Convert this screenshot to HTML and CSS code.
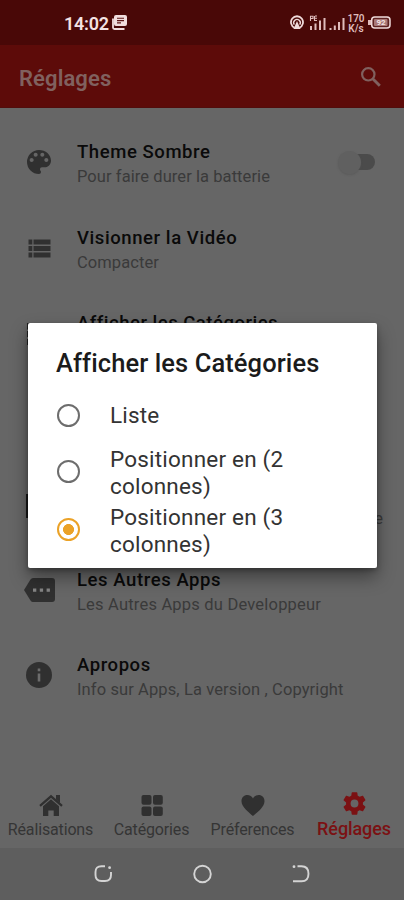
FILE: index.html
```html
<!DOCTYPE html>
<html lang="fr">
<head>
<meta charset="utf-8">
<meta name="viewport" content="width=device-width, initial-scale=1">
<title>Réglages</title>
<link rel="stylesheet" href="styles.css">
</head>
<body>
<div class="screen">
  <header class="status">
    <div class="clock"><span class="time">14:02</span>
      <svg width="15" height="15" viewBox="0 0 15 15"><path fill="#f1dddd" d="M4 0h9q2 0 2 2v7q0 2-2 2H4q-2 0-2-2V2q0-2 2-2z"/><path d="M1 3.500v9q0 1.500 1.500 1.500h10" fill="none" stroke="#f1dddd" stroke-width="1.800"/><path d="M5 3.300h7M5 5.600h7M5 7.900h4" stroke="#5a1414" stroke-width="1.100"/></svg>
    </div>
    <div class="signals">
      <svg class="cast" width="14" height="15" viewBox="0 0 14 15"><g fill="none" stroke="#efdada" stroke-width="1.800"><path d="M4.500 12.700a6 6 0 1 1 5 0"/><path d="M4.300 9.700a3.300 3.300 0 1 1 5.400 0" stroke-width="1.400"/></g><path fill="#efdada" d="M7 6l3.500 8h-7z"/></svg>
      <svg class="bars" width="37" height="16" viewBox="0 0 37 16"><g fill="#dfbcbc"><path d="M1 11h2v4H1zM5.500 8.500h2V15h-2zM10 5.500h2V15h-2zM14.500 3h2v12h-2zM20.500 13h2v2h-2zM24.800 10.500h2V15h-2zM29 7h2v8h-2zM33.500 3h2v12h-2z"/></g><path d="M1.500 1v5M1 1.300h3v2.200H2M6 1h2M6 3.200h2M6 5.500h2M5.500 1v5" fill="none" stroke="#dfbcbc" stroke-width="1.100"/></svg>
      <div class="speed"><span>170</span><span>K/s</span></div>
      <svg class="battery" width="23" height="13" viewBox="0 0 23 13"><path fill="#dfbcbc" d="M0 4h3v5H0z"/><rect x="3.700" y="1" width="18.300" height="11" rx="3" fill="#5e2221" stroke="#efdada" stroke-width="1.500"/><rect x="6" y="3" width="13.500" height="7" rx="1" fill="#a87877"/><text class="level" x="13" y="9.300" text-anchor="middle">92</text></svg>
    </div>
  </header>
  <div class="appbar">
    <h1>Réglages</h1>
    <svg width="22" height="22" viewBox="0 0 22 22" fill="none" stroke="#80615f"><circle cx="8.300" cy="8.300" r="6.200" stroke-width="2.200"/><path d="M13 13l6.800 6.800" stroke-width="2.900"/></svg>
  </div>
  <main class="settings">
    <section class="row">
      <svg class="icon palette" viewBox="3 3 18 18"><path fill="#303030" d="M12 3a9 9 0 0 0 0 18c.83 0 1.500-.67 1.500-1.500 0-.39-.15-.74-.39-1.010-.23-.26-.38-.61-.38-.99 0-.83.67-1.500 1.500-1.500H16c2.760 0 5-2.240 5-5 0-4.420-4.030-8-9-8zm-5.500 9c-.83 0-1.500-.67-1.500-1.500S5.670 9 6.500 9 8 9.670 8 10.500 7.330 12 6.500 12zm3-4C8.670 8 8 7.330 8 6.500S8.670 5 9.500 5s1.500.67 1.500 1.500S10.330 8 9.500 8zm5 0c-.83 0-1.500-.67-1.500-1.500S13.670 5 14.500 5s1.500.67 1.500 1.500S15.330 8 14.500 8zm3 4c-.83 0-1.500-.67-1.500-1.500S16.670 9 17.500 9s1.500.67 1.500 1.500-.67 1.500-1.500 1.500z"/></svg>
      <div class="copy"><h2>Theme Sombre</h2><p>Pour faire durer la batterie</p></div>
      <span class="switch"></span>
    </section>
    <section class="row">
      <svg class="icon" viewBox="0 0 24 24"><path fill="#303030" d="M2.500 2.500h3.800v5H2.500zM7.500 2.500h17v5h-17zM2.500 9h3.800v5H2.500zM7.500 9h17v5h-17zM2.500 15.500h3.800v5H2.500zM7.500 15.500h17v5h-17z"/></svg>
      <div class="copy"><h2>Visionner la Vidéo</h2><p>Compacter</p></div>
    </section>
    <section class="row">
      <svg class="icon" viewBox="0 0 24 24"><path fill="#202020" d="M1 0h23v6.500H1zM1 8h5v6H1zM1 16h5v6H1z"/></svg>
      <div class="copy"><h2 class="t3">Afficher les Catégories</h2></div>
    </section>
    <section class="row"></section>
    <section class="row">
      <svg class="icon" viewBox="0 0 24 24"><path fill="#181818" d="M0 0h24v24H0z"/></svg>
      <div class="copy tail"><p>e</p></div>
    </section>
    <section class="row">
      <svg class="icon wide" viewBox="0 0 31 24"><path fill="#303030" d="M9 0h19q3 0 3 3v18q0 3-3 3H9q-1.500 0-2.500-1.500L0 12l6.500-10.500Q7.500 0 9 0z"/><path fill="#858585" d="M9 10.500h3.300v3.300H9zM15.800 10.500h3.300v3.300h-3.300zM22.600 10.500h3.300v3.300h-3.300z"/></svg>
      <div class="copy"><h2>Les Autres Apps</h2><p class="p6">Les Autres Apps du Developpeur</p></div>
    </section>
    <section class="row">
      <svg class="icon info" viewBox="0 0 26 26"><circle cx="13" cy="13" r="13" fill="#303030"/><path fill="#6c6c6c" d="M11.700 6.500h2.600v2.700h-2.600zM11.700 11.500h2.600v8h-2.600z"/></svg>
      <div class="copy"><h2>Apropos</h2><p class="p7">Info sur Apps, La version , Copyright</p></div>
    </section>
  </main>
  <nav class="tabs">
    <div class="tab"><svg width="24" height="24" viewBox="0 0 24 24"><path d="M1 12.800L12 3.300l11 9.500" fill="none" stroke="#303030" stroke-width="2.200"/><path fill="#303030" d="M17 2h4v8l-4-3.500zM12 6.300l8 7V23h-5.300v-5.500H9.300V23H4v-9.700z"/></svg><span>Réalisations</span></div>
    <div class="tab"><svg width="24" height="24" viewBox="0 0 24 24" fill="#303030"><rect x="1.500" y="2" width="10" height="9.700" rx="2"/><rect x="13" y="2" width="9.800" height="9.700" rx="2"/><rect x="1.500" y="13.500" width="10" height="9.500" rx="2"/><rect x="13" y="13.500" width="9.800" height="9.500" rx="2"/></svg><span>Catégories</span></div>
    <div class="tab"><svg width="24" height="24" viewBox="0 0 24 24"><path fill="#303030" d="M12 23C8 19.500.500 14 .500 8.200.500 4.500 3 2 6.300 2 8.800 2 11 3.300 12 5.500 13 3.300 15.200 2 17.700 2 21 2 23.500 4.500 23.500 8.200 23.500 14 16 19.500 12 23z"/></svg><span>Préferences</span></div>
    <div class="tab active"><svg width="27" height="27" viewBox="0 0 24 24"><path fill="#7b1113" d="M19.430 12.980c.04-.32.070-.64.070-.98s-.03-.66-.07-.98l2.110-1.650c.19-.15.24-.42.12-.64l-2-3.460c-.12-.22-.39-.3-.61-.22l-2.490 1c-.52-.4-1.080-.73-1.690-.98l-.38-2.650C14.460 2.180 14.250 2 14 2h-4c-.25 0-.46.180-.49.420l-.38 2.650c-.61.250-1.170.590-1.690.980l-2.490-1c-.23-.09-.49 0-.61.220l-2 3.460c-.13.220-.07.490.12.640l2.110 1.650c-.04.320-.07.650-.07.980s.03.660.07.980l-2.110 1.650c-.19.150-.24.420-.12.640l2 3.460c.12.220.39.300.61.220l2.490-1c.52.400 1.080.730 1.690.980l.38 2.650c.03.240.24.420.49.420h4c.25 0 .46-.18.49-.42l.38-2.650c.61-.25 1.170-.59 1.690-.98l2.490 1c.23.090.49 0 .61-.22l2-3.460c.12-.22.070-.49-.12-.64l-2.110-1.650zM12 15.500a3.500 3.500 0 1 1 0-7 3.500 3.500 0 0 1 0 7z"/></svg><span>Réglages</span></div>
  </nav>
  <footer class="system">
    <svg width="20" height="20" viewBox="0 0 20 20"><path d="M12 2.200H8.500Q2.500 2.200 2.500 8v3q0 6 6 6h3.500q6 0 6-6V8" fill="none" stroke="#d4d4d4" stroke-width="1.900"/><circle cx="16.600" cy="3.700" r="1.400" fill="#d4d4d4"/></svg>
    <svg width="20" height="20" viewBox="0 0 20 20"><circle cx="10.500" cy="10" r="8.300" fill="none" stroke="#d4d4d4" stroke-width="1.900"/></svg>
    <svg width="20" height="20" viewBox="0 0 20 20"><path d="M6.500 2.200H10.500Q17.500 2.200 17.500 9.700T10.500 17.200H2" fill="none" stroke="#d4d4d4" stroke-width="1.900"/><circle cx="3" cy="2.700" r="1.400" fill="#d4d4d4"/></svg>
  </footer>
  <div class="dialog" role="dialog">
    <h3>Afficher les Catégories</h3>
    <div class="option"><i class="radio"></i><span>Liste</span></div>
    <div class="option"><i class="radio raised"></i><span>Positionner en (2<br>colonnes)</span></div>
    <div class="option"><i class="radio raised checked"></i><span>Positionner en (3<br>colonnes)</span></div>
  </div>
</div>
</body>
</html>
```
FILE: styles.css
```css
* { box-sizing: border-box; }
body, h1, h2, h3, p { margin: 0; }
body { font-family: Roboto, "Liberation Sans", sans-serif; background: #666; }
svg { display: block; flex: none; }
.screen { position: relative; width: 404px; height: 900px; overflow: hidden; background: #666; display: flex; flex-direction: column; }
.status { height: 45px; flex: none; background: #490807; display: flex; justify-content: space-between; padding: 0 13px 0 64px; align-items: center; }
.clock { display: flex; align-items: center; gap: 3px; }
.time { color: #f3e2e2; font-size: 18px; font-weight: 600; line-height: 20px; padding-top: 2px; letter-spacing: -.25px; }
.signals { display: flex; align-items: center; }
.cast { margin-right: 5px; }
.speed { display: flex; flex-direction: column; align-items: center; width: 18px; margin: 2px 3px 0 1px; color: #dfbcbc; font-size: 10px; line-height: 10px; font-weight: 600; }
.level { font-size: 8px; font-weight: 700; fill: #f3e2e2; }
.appbar { height: 63px; flex: none; background: #5d0b09; border-bottom: 1px solid #520d0c; display: flex; align-items: center; justify-content: space-between; padding: 2px 22px 0 19px; }
h1 { color: #80615f; font-size: 22px; line-height: 28px; font-weight: 600; padding-top: 3px; letter-spacing: .1px; }
.settings { height: 666px; flex: none; padding-top: 13px; display: grid; grid-template-rows: repeat(7, 85.5px); align-content: start; }
.row { display: flex; align-items: center; padding: 0 28px 0 26px; }
.icon { width: 24px; height: 24px; margin-right: 27px; overflow: visible; }
.palette { margin: 0 26px 3px 1px; }
.wide { width: 31px; margin: 0 22px 2px -2px; }
.info { width: 26px; height: 26px; margin: 0 25px 3px 0; }
.copy { flex: 1; min-height: 53px; padding-top: 3px; white-space: nowrap; }
.copy h2 { color: #0a0a0a; font-size: 18.5px; line-height: 25px; font-weight: 500; letter-spacing: .58px; }
.copy .t3 { letter-spacing: .5px; }
.copy p { color: #3a3a3a; font-size: 16.5px; line-height: 23px; letter-spacing: .07px; }
.copy .p6 { letter-spacing: .2px; }
.copy .p7 { letter-spacing: .11px; }
.tail { text-align: right; padding-top: 28px; margin-right: -7px; }
.switch { position: relative; width: 33px; height: 16px; margin: 0 1px 4px 0; border-radius: 8px; background: #4b4b4b; }
.switch::before { content: ""; position: absolute; left: -4px; top: -3px; width: 23px; height: 23px; border-radius: 50%; background: #606060; box-shadow: 0 1px 2px #5559; }
.tabs { height: 74px; flex: none; display: grid; grid-template-columns: repeat(4, 101px); padding-top: 19px; }
.tab { display: flex; flex-direction: column; align-items: center; color: #353535; font-size: 16px; line-height: 20px; letter-spacing: -.15px; gap: 3px; white-space: nowrap; }
.active { color: #7b1113; font-size: 18px; font-weight: 500; letter-spacing: -.1px; margin: -3px 0 0 1px; gap: 2px; }
.system { height: 52px; flex: none; background: #5e5e5e; display: flex; justify-content: center; align-items: center; gap: 79px; }
.dialog { position: absolute; left: 28px; top: 323px; width: 349px; height: 245px; background: #fff; border-radius: 2px; box-shadow: 0 9px 18px #0006, 0 2px 5px #0004; padding: 24px 28px 0; display: flex; flex-direction: column; }
h3 { color: #1b1b1b; font-size: 25.5px; line-height: 32px; font-weight: 500; white-space: nowrap; margin-bottom: 7px; letter-spacing: .09px; }
.option { min-height: 58px; display: flex; align-items: center; color: #333; font-size: 22.5px; line-height: 27px; letter-spacing: .2px; }
.radio { width: 23px; height: 23px; margin: 0 30px 0 1px; border: 2px solid #6d6d6d; border-radius: 50%; flex: none; }
.raised { margin-bottom: 4px; }
.checked { margin-bottom: 3px; border-color: #eba227; background: radial-gradient(circle, #eba227 0 5.2px, transparent 5.8px); }
```
